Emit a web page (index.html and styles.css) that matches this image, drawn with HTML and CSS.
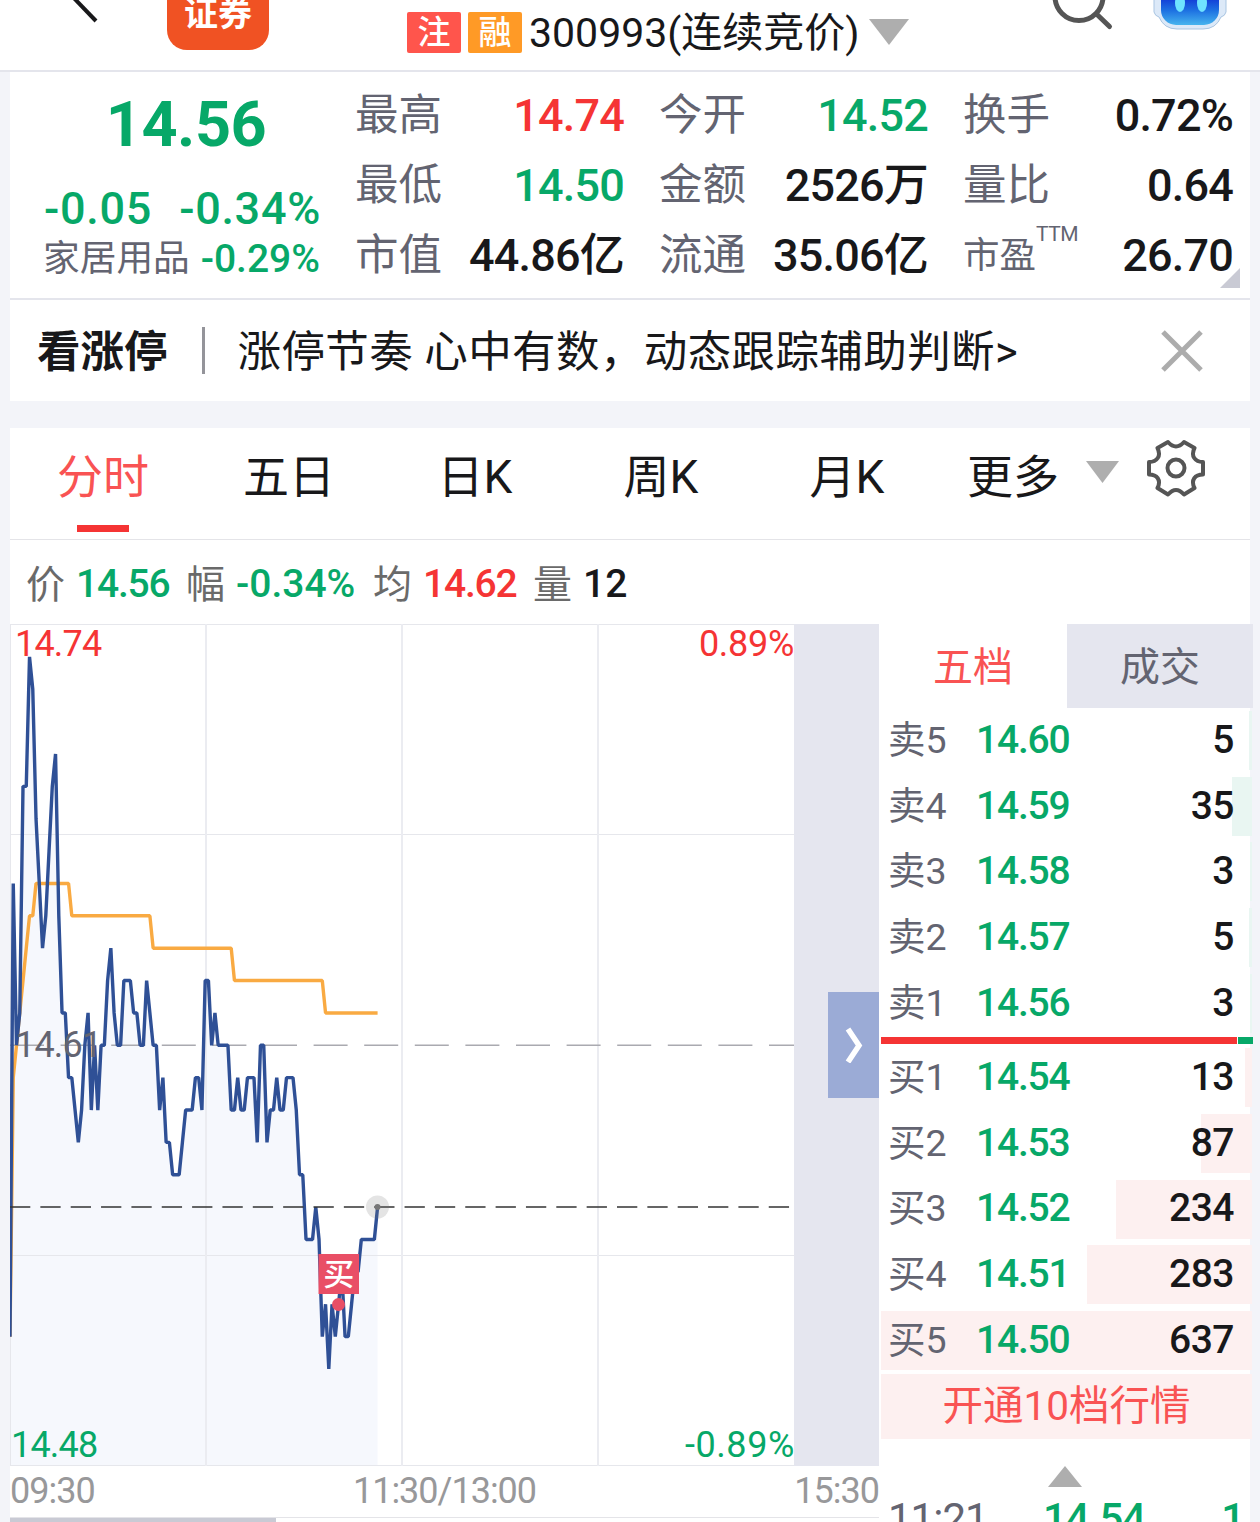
FILE: index.html
```html
<!DOCTYPE html>
<html lang="zh-CN">
<head>
    <meta charset="UTF-8">
    <meta name="viewport" content="width=device-width, initial-scale=1.0">
    <title>300993 分时行情</title>
    <link rel="stylesheet" href="styles.css">
</head>
<body>
    <header class="header">
        <svg class="back" width="40" height="24" viewBox="0 0 40 24"><path d="M8 -6 L34 21" /></svg>
        <div class="broker">证券</div>
        <div class="title">
            <span class="tag tag-red">注</span>
            <span class="tag tag-orange">融</span>
            <span class="code">300993(连续竞价)</span>
            <svg class="arrow" width="40" height="26" viewBox="0 0 40 26"><path d="M0 0 H40 L20 26 Z" /></svg>
        </div>
        <svg class="search" width="62" height="32" viewBox="0 0 62 32">
            <circle cx="27" cy="-3.5" r="24" />
            <path d="M44.5 14 L57.5 26.5" />
        </svg>
        <svg class="robot" width="74" height="30" viewBox="0 0 74 30">
            <defs>
                <linearGradient id="face" x1="0" y1="0" x2="0" y2="1">
                    <stop offset="0.5" stop-color="#1440d8" />
                    <stop offset="0.72" stop-color="#1e72e2" />
                    <stop offset="1" stop-color="#46b4ee" />
                </linearGradient>
            </defs>
            <path d="M1 -10 V12 Q2 16 6 17 Q11 29 24 29 H50 Q63 29 68 17 Q72 16 73 12 V-10 Z" fill="#dce9f8" stroke="#a9c5e2" />
            <rect x="8" y="-26" width="58" height="51" rx="15" fill="url(#face)" />
            <ellipse cx="27" cy="3" rx="5" ry="9" fill="#6fe3ff" />
            <ellipse cx="49" cy="3" rx="5" ry="9" fill="#6fe3ff" />
        </svg>
    </header>

    <section class="quote">
        <div class="price">
            <div class="now">14.56</div>
            <div class="change"><span>-0.05</span><span>-0.34%</span></div>
            <div class="sector"><span>家居用品</span><b>-0.29%</b></div>
        </div>
        <dl class="stats">
            <div><dt>最高</dt><dd class="red">14.74</dd></div>
            <div><dt>今开</dt><dd class="green">14.52</dd></div>
            <div><dt>换手</dt><dd>0.72%</dd></div>
            <div><dt>最低</dt><dd class="green">14.50</dd></div>
            <div><dt>金额</dt><dd>2526万</dd></div>
            <div><dt>量比</dt><dd>0.64</dd></div>
            <div><dt>市值</dt><dd>44.86亿</dd></div>
            <div><dt>流通</dt><dd>35.06亿</dd></div>
            <div><dt class="small">市盈<sup>TTM</sup></dt><dd>26.70</dd></div>
        </dl>
        <svg class="corner" width="20" height="20" viewBox="0 0 20 20"><path d="M20 0 V20 H0 Z" /></svg>
    </section>

    <section class="banner">
        <strong>看涨停</strong>
        <i class="divider"></i>
        <span class="banner-text">涨停节奏 心中有数，动态跟踪辅助判断&gt;</span>
        <svg class="close" width="42" height="42" viewBox="0 0 42 42"><path d="M2 2 L40 40 M40 2 L2 40" /></svg>
    </section>

    <nav class="tabs">
        <a class="tab active">分时</a>
        <a class="tab">五日</a>
        <a class="tab">日K</a>
        <a class="tab">周K</a>
        <a class="tab">月K</a>
        <a class="more">更多</a>
        <svg class="arrow" width="33" height="22" viewBox="0 0 33 22"><path d="M0 0 H33 L16.5 22 Z" /></svg>
        <svg class="gear" width="58" height="58" viewBox="0 0 58 58">
            <path d="M21 3 Q29 12 37 3 L47.5 9 C43.5 17 48 23 56 23 V35.5 C48 35.5 43.5 41 47.5 49 L37 55.5 Q29 46.5 21 55.5 L10.5 49 C14.5 41 10 35.5 2 35.5 V23 C10 23 14.5 17 10.5 9 Z" />
            <circle cx="29" cy="29" r="8.5" />
        </svg>
    </nav>

    <div class="info">
        <span>价</span><b class="green i-price">14.56</b>
        <span>幅</span><b class="green i-rate">-0.34%</b>
        <span>均</span><b class="red i-price">14.62</b>
        <span>量</span><b>12</b>
    </div>

    <main class="main">
        <div class="left">
            <div class="plot">
                <div class="chart">
                    <svg width="784" height="842" viewBox="0 0 784 842">
                        <!-- x: minutes since 09:30, y: ticks (0.01) below 14.61 -->
                        <g transform="translate(0 421.3) scale(3.253 32.37)">
                            <polygon class="area" points="0,13 0,9 1,-5 2,0 3,-1 4,-8 5,-8 6,-12 7,-11 8,-7 9,-5 10,-3 11,-4 12,-6 13,-8 14,-9 15,-4 16,-1 17,-1 18,1 19,1 20,2 21,3 22,2 23,0 24,-1 25,2 26,0 27,2 28,0 29,0 30,-2 31,-3 32,-1 33,0 34,0 35,-2 37,-2 38,-1 39,-1 40,0 41,0 42,-2 43,-1 44,0 45,0 46,2 47,1 48,3 49,3 50,4 52,4 53,3 54,2 56,2 57,1 58,1 59,2 60,-2 61,-2 62,0 63,-1 64,0 67,0 68,2 69,2 70,1 71,2 72,2 73,1 75,1 76,3 77,0 78,0 79,3 80,2 81,2 82,1 83,2 84,2 85,1 87,1 88,2 89,4 90,4 91,6 93,6 94,5 95,6 96,9 97,8 98,10 99,8 100,9 101,8 102,7 103,9 104,9 105,8 106,7 107,7 108,6 112,6 113,5 113,13" />
                        </g>
                        <g class="grid">
                            <path d="M0 0.5 H784 M0 210.5 H784 M0 631.5 H784 M0 841.5 H784 M0.5 0 V842" />
                            <path class="thick" d="M196 0 V842 M392 0 V842 M588 0 V842" />
                        </g>
                        <path class="base-line" d="M0 421.3 H784" />
                        <g transform="translate(0 421.3) scale(3.253 32.37)">
                            <polyline class="avg" points="0,9 1,1 2,0 3,-1 4,-2 5,-3 6,-4 7,-4 8,-5 18,-5 19,-4 43,-4 44,-3 68,-3 69,-2 96,-2 97,-1 113,-1" />
                            <polyline class="line" points="0,9 1,-5 2,0 3,-1 4,-8 5,-8 6,-12 7,-11 8,-7 9,-5 10,-3 11,-4 12,-6 13,-8 14,-9 15,-4 16,-1 17,-1 18,1 19,1 20,2 21,3 22,2 23,0 24,-1 25,2 26,0 27,2 28,0 29,0 30,-2 31,-3 32,-1 33,0 34,0 35,-2 37,-2 38,-1 39,-1 40,0 41,0 42,-2 43,-1 44,0 45,0 46,2 47,1 48,3 49,3 50,4 52,4 53,3 54,2 56,2 57,1 58,1 59,2 60,-2 61,-2 62,0 63,-1 64,0 67,0 68,2 69,2 70,1 71,2 72,2 73,1 75,1 76,3 77,0 78,0 79,3 80,2 81,2 82,1 83,2 84,2 85,1 87,1 88,2 89,4 90,4 91,6 93,6 94,5 95,6 96,9 97,8 98,10 99,8 100,9 101,8 102,7 103,9 104,9 105,8 106,7 107,7 108,6 112,6 113,5" />
                        </g>
                        <path class="now-line" d="M0 583 H780" />
                        <circle class="halo" cx="367.5" cy="583" r="11.5" />
                        <circle class="dot" cx="367.5" cy="583" r="3" />
                        <circle class="buy-dot" cx="328.5" cy="680.5" r="6.5" />
                        <rect class="buy-box" x="308.5" y="630" width="40.5" height="40" />
                        <text class="buy-text" x="328.7" y="661">买</text>
                    </svg>
                    <span class="label top-left red">14.74</span>
                    <span class="label top-right red">0.89%</span>
                    <span class="label mid-left">14.61</span>
                    <span class="label bottom-left green">14.48</span>
                    <span class="label bottom-right green">-0.89%</span>
                </div>
                <div class="after-hours">
                    <div class="handle">
                        <svg width="20" height="36" viewBox="0 0 20 36"><path d="M4 2 L15 18.5 L4 35" /></svg>
                    </div>
                </div>
            </div>
            <div class="times"><span>09:30</span><span>11:30/13:00</span><span>15:30</span></div>
            <div class="scroll"><div class="thumb"></div></div>
        </div>

        <aside class="book">
            <div class="book-tabs"><span class="on">五档</span><span>成交</span></div>
            <div class="row sell"><i class="bar" style="width: 3px"></i><span>卖5</span><b>14.60</b><em>5</em></div>
            <div class="row sell"><i class="bar" style="width: 20px"></i><span>卖4</span><b>14.59</b><em>35</em></div>
            <div class="row sell"><i class="bar" style="width: 2px"></i><span>卖3</span><b>14.58</b><em>3</em></div>
            <div class="row sell"><i class="bar" style="width: 3px"></i><span>卖2</span><b>14.57</b><em>5</em></div>
            <div class="row sell"><i class="bar" style="width: 2px"></i><span>卖1</span><b>14.56</b><em>3</em></div>
            <div class="ratio"><i></i><i></i></div>
            <div class="row buy"><i class="bar" style="width: 7px"></i><span>买1</span><b>14.54</b><em>13</em></div>
            <div class="row buy"><i class="bar" style="width: 51px"></i><span>买2</span><b>14.53</b><em>87</em></div>
            <div class="row buy"><i class="bar" style="width: 136px"></i><span>买3</span><b>14.52</b><em>234</em></div>
            <div class="row buy"><i class="bar" style="width: 165px"></i><span>买4</span><b>14.51</b><em>283</em></div>
            <div class="row buy"><i class="bar" style="width: 371px"></i><span>买5</span><b>14.50</b><em>637</em></div>
            <div class="open-level">开通10档行情</div>
            <svg class="arrow up" width="34" height="21" viewBox="0 0 34 21"><path d="M0 21 H34 L17 0 Z" /></svg>
            <div class="deal"><span>11:21</span><b>14.54</b><em>1</em></div>
        </aside>
    </main>
</body>
</html>
```
FILE: styles.css
```css
* {
    box-sizing: border-box;
}
body {
    margin: 0;
    height: 1522px;
    overflow: hidden;
    background-color: #f3f4f9;
    color: #18181a;
    font-family: Roboto, "Noto Sans CJK SC", sans-serif;
}
b, em, i {
    font-style: normal;
    font-weight: 500;
}
.red {
    color: #f53434;
}
.green {
    color: #07a868;
}
.arrow {
    fill: #aeaeae;
    flex: none;
}

/* header */
.header {
    display: flex;
    align-items: flex-start;
    height: 72px;
    padding-left: 62px;
    background-color: #fff;
    border-bottom: 2px solid #e4e5ec;
}
.back {
    fill: none;
    stroke: #18181a;
    stroke-width: 4;
}
.broker {
    width: 102px;
    height: 50px;
    margin-left: 65px;
    border-radius: 0 0 20px 20px;
    background-color: #f05223;
    color: #fff;
    font-size: 34px;
    font-weight: 700;
    line-height: 28px;
    text-align: center;
}
.title {
    display: flex;
    align-items: center;
    width: 502px;
    height: 64px;
    margin-left: 138px;
}
.tag {
    width: 54px;
    height: 41px;
    margin-right: 7px;
    border-radius: 2px;
    color: #fff;
    font-size: 33px;
    font-weight: 500;
    line-height: 42px;
    text-align: center;
}
.tag-red {
    background-color: #ff554c;
}
.tag-orange {
    background-color: #ff9a26;
}
.code {
    width: 340px;
    margin-top: -6px;
    font-size: 41px;
    white-space: nowrap;
}
.search {
    margin-left: 143px;
    fill: none;
    stroke: #555;
    stroke-width: 5;
    stroke-linecap: round;
}
.robot {
    margin-left: 39px;
}

/* quote */
.quote {
    position: relative;
    display: flex;
    height: 228px;
    margin: 0 10px;
    background-color: #fff;
    border-bottom: 2px solid #e4e5ec;
}
.price {
    width: 345px;
    padding-left: 34px;
    color: #07a868;
}
.now {
    width: 284px;
    margin-top: 16px;
    font-size: 63px;
    font-weight: 700;
    line-height: 74px;
    letter-spacing: -0.5px;
    text-align: center;
}
.change {
    display: flex;
    justify-content: space-between;
    width: 277px;
    margin-top: 21px;
    font-size: 45px;
    font-weight: 500;
    line-height: 52px;
    letter-spacing: 0.7px;
}
.sector {
    display: flex;
    justify-content: space-between;
    align-items: center;
    width: 276px;
    font-size: 39px;
    line-height: 48px;
}
.sector span {
    margin-left: -1px;
    color: #636471;
    font-size: 36.7px;
}
.stats {
    display: grid;
    grid-template-columns: 269px 269px 270px;
    grid-auto-rows: 70px;
    column-gap: 35px;
    margin: 9px 0 0;
}
.stats div {
    display: flex;
    justify-content: space-between;
    align-items: center;
    line-height: 70px;
}
.stats dt {
    color: #636471;
    font-size: 43.5px;
}
.stats dt.small {
    position: relative;
    font-size: 36.5px;
}
.stats sup {
    position: absolute;
    left: 73px;
    top: -22px;
    font-size: 21px;
    letter-spacing: -0.5px;
}
.stats dd {
    margin: 0;
    font-size: 45px;
    font-weight: 500;
    letter-spacing: -0.8px;
}
.corner {
    position: absolute;
    right: 10px;
    bottom: 10px;
    fill: #c9cad4;
}

/* banner */
.banner {
    display: flex;
    align-items: center;
    height: 101px;
    margin: 0 10px;
    padding: 0 47px 0 27px;
    background-color: #fff;
    font-size: 43.5px;
}
.banner strong, .banner-text {
    margin-top: -4px;
}
.divider {
    width: 3px;
    height: 47px;
    margin: 0 33px 0 34px;
    background-color: #94949a;
}
.banner-text {
    flex: 1;
    letter-spacing: 0.4px;
    white-space: nowrap;
}
.close {
    stroke: #acacac;
    stroke-width: 5;
}

/* tabs */
.tabs {
    display: flex;
    height: 112px;
    margin: 27px 10px 0;
    background-color: #fff;
    border-bottom: 1px solid #e4e4e8;
    font-size: 46px;
    line-height: 98px;
}
.tab {
    display: flex;
    flex-direction: column;
    align-items: center;
    width: 186px;
}
.tab.active {
    color: #f95353;
}
.tab.active::after {
    content: "";
    width: 52px;
    height: 7px;
    margin-top: -1px;
    background-color: #f53434;
}
.more {
    width: 119px;
    padding-left: 27px;
}
.tabs .arrow {
    margin: 33px 0 0 27px;
}
.gear {
    margin: 11px 0 0 28px;
    fill: none;
    stroke: #555;
    stroke-width: 4;
    stroke-linejoin: round;
}

/* price line above the chart */
.info {
    display: flex;
    align-items: center;
    height: 84px;
    margin: 0 10px;
    padding: 0 0 0 16px;
    background-color: #fff;
    font-size: 39px;
}
.info span {
    width: 50px;
    margin-top: -2px;
    color: #6a6a6a;
}
.info b {
    margin-top: 4px;
}
.info .i-price {
    width: 110px;
    letter-spacing: -1.2px;
}
.i-rate {
    width: 137px;
}

/* chart */
.main {
    display: flex;
    height: 898px;
    margin-left: 10px;
}
.left {
    width: 869px;
    background-color: #fff;
}
.plot {
    display: flex;
    height: 842px;
}
.chart {
    position: relative;
    width: 784px;
}
.chart svg {
    display: block;
}
.grid {
    fill: none;
    stroke: #e6e7ec;
}
.grid .thick {
    stroke: #ebecf1;
    stroke-width: 2;
}
.area {
    fill: #f6f8fd;
}
.line, .avg {
    fill: none;
    stroke-width: 3.4;
    vector-effect: non-scaling-stroke;
    stroke-linejoin: bevel;
}
.line {
    stroke: #2f5096;
}
.avg {
    stroke: #f9aa42;
}
.base-line {
    stroke: #aaaab0;
    stroke-width: 1.5;
    stroke-dasharray: 34 16.6;
}
.now-line {
    stroke: #333;
    stroke-width: 1.7;
    stroke-dasharray: 20.3 10.05;
}
.halo {
    fill: rgba(120, 120, 120, 0.2);
}
.dot {
    fill: #777;
}
.buy-dot, .buy-box {
    fill: #e94f66;
}
.buy-text {
    fill: #fff;
    font-size: 31px;
    font-weight: 500;
    text-anchor: middle;
}
.label {
    position: absolute;
    font-size: 36px;
    line-height: 40px;
    letter-spacing: -0.8px;
}
.top-left {
    left: 5px;
    top: 0;
}
.top-right {
    right: 0;
    top: 0;
    letter-spacing: -0.3px;
}
.mid-left {
    left: 5px;
    top: 401px;
    color: #636471;
}
.bottom-left {
    left: 1px;
    bottom: 1px;
}
.bottom-right {
    right: -1px;
    bottom: 1px;
    letter-spacing: 0.6px;
}
.after-hours {
    display: flex;
    justify-content: flex-end;
    align-items: center;
    width: 85px;
    background-color: #e5e6ef;
}
.handle {
    display: flex;
    justify-content: center;
    align-items: center;
    width: 51px;
    height: 106px;
    background-color: #9babd6;
}
.handle path {
    fill: none;
    stroke: #fff;
    stroke-width: 5.5;
}
.times {
    display: flex;
    justify-content: space-between;
    height: 51px;
    color: #98989a;
    font-size: 36px;
    line-height: 50px;
    letter-spacing: -1px;
}
.scroll {
    height: 5px;
    border-top: 1px solid #e4e4e8;
}
.thumb {
    width: 266px;
    height: 4px;
    background-color: #c9cad4;
}

/* order book */
.book {
    width: 374px;
    background: linear-gradient(90deg, #fff 371px, #f3f4f9 371px);
}
.book-tabs {
    display: flex;
    height: 84px;
    color: #636471;
    font-size: 40px;
    line-height: 87px;
    text-align: center;
}
.book-tabs span {
    width: 186px;
    background-color: #e5e6ef;
}
.book-tabs .on {
    width: 188px;
    background-color: #fff;
    color: #f95353;
}
.row {
    position: relative;
    display: flex;
    align-items: center;
    height: 65.7px;
    padding: 0 19px 0 9px;
    font-size: 39px;
}
.row span, .row b, .row em {
    position: relative;
    margin-top: -2px;
}
.row span {
    width: 88px;
    margin-top: -9px;
    color: #636471;
    font-size: 37.5px;
}
.row b {
    color: #07a868;
    letter-spacing: -1.2px;
}
.row em {
    margin-left: auto;
    letter-spacing: -0.5px;
}
.bar {
    position: absolute;
    right: 1px;
    top: 3px;
    height: 59px;
}
.sell .bar {
    background-color: #e9f6f2;
}
.buy .bar {
    background-color: #fdf0f0;
}
.ratio {
    display: flex;
    gap: 1px;
    height: 7px;
    margin: 0.5px 0 1.2px 2px;
}
.ratio i {
    width: 15px;
    background-color: #07a868;
}
.ratio i:first-child {
    width: 356px;
    background-color: #f53434;
}
.open-level {
    height: 65px;
    margin: 0 1px 0 2px;
    background-color: #fdf0f0;
    color: #f95353;
    font-size: 40.5px;
    line-height: 65px;
    text-align: center;
}
.up {
    display: block;
    margin: 27px auto 0 169px;
}
.deal {
    display: flex;
    height: 37px;
    padding: 11px 9px 0;
    overflow: hidden;
    color: #636471;
    font-size: 42px;
    line-height: 42px;
    letter-spacing: -1px;
}
.deal span {
    width: 155px;
}
.deal b {
    color: #07a868;
}
.deal em {
    margin-left: auto;
    color: #07a868;
}
```
